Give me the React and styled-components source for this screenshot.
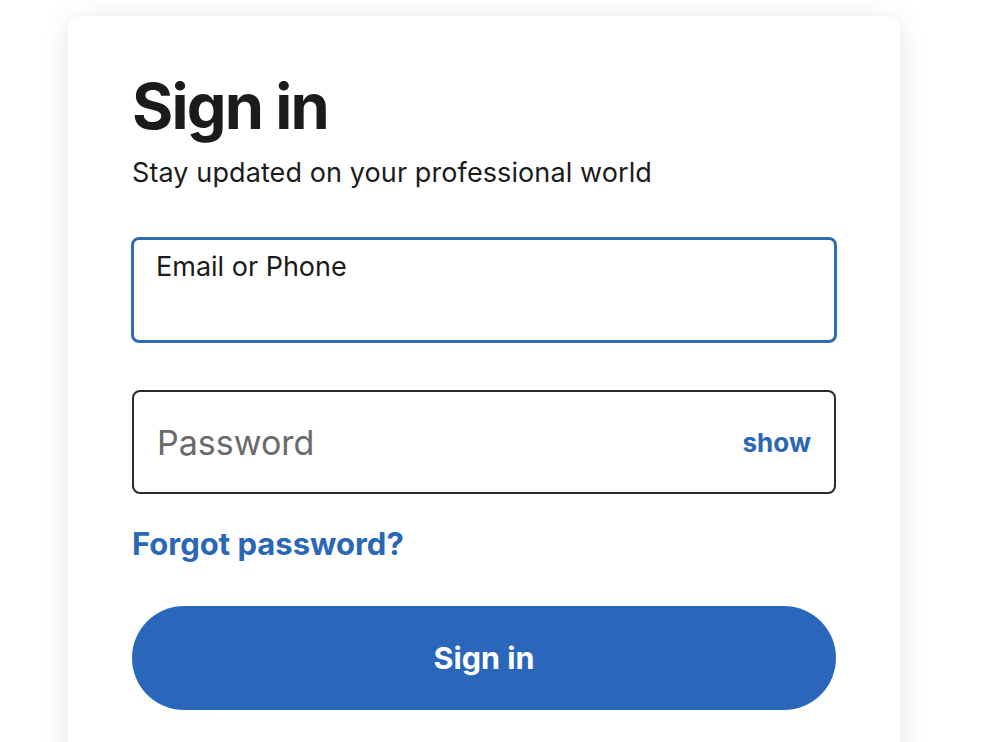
import React from "react";
import styled, { createGlobalStyle } from "styled-components";

const Global = createGlobalStyle`
  html, body { margin: 0; padding: 0; background: #ffffff; }
  body { font-family: Inter, "Noto Sans", "Liberation Sans", sans-serif; color: #1b1b1b; }
  * { box-sizing: border-box; }
`;

const Page = styled.div`
  width: 989px;
  height: 742px;
  overflow: hidden;
  padding: 16px 0 0 68px;
`;

const Card = styled.div`
  width: 832px;
  min-height: 760px;
  background: #fff;
  border-radius: 12px;
  box-shadow: 0 4px 28px rgba(0, 0, 0, 0.11);
  padding: 57px 64px 0 64px;
  display: flex;
  flex-direction: column;
`;

const Title = styled.h1`
  margin: 0;
  font-size: 63px;
  line-height: 66px;
  font-weight: 700;
  letter-spacing: -1.8px;
  color: #1b1b1b;
`;

const Subtitle = styled.p`
  margin: 18px 0 0;
  font-size: 27px;
  line-height: 31px;
  font-weight: 400;
  letter-spacing: 0.1px;
  color: #1b1b1b;
`;

const Field = styled.div`
  margin-top: ${(p) => p.$mt}px;
  margin-left: ${(p) => (p.$focused ? "-1px" : "0")};
  margin-right: ${(p) => (p.$focused ? "-1px" : "0")};
  height: ${(p) => p.$h}px;
  border: ${(p) => (p.$focused ? "3px solid #2f6db3" : "2px solid #2b2b2b")};
  border-radius: 8px;
  display: flex;
  align-items: ${(p) => (p.$focused ? "flex-start" : "center")};
  justify-content: space-between;
  padding: ${(p) => (p.$focused ? "11px 22px" : "0 23px")};
`;

const Label = styled.span`
  font-size: 27px;
  line-height: 31px;
  color: #1b1b1b;
`;

const Placeholder = styled.span`
  font-size: 34px;
  line-height: 41px;
  color: #6a6a6a;
`;

const Show = styled.span`
  font-size: 26px;
  line-height: 31px;
  font-weight: 700;
  color: #2a67b5;
`;

const Link = styled.a`
  margin-top: 33px;
  font-size: 31px;
  line-height: 34px;
  font-weight: 700;
  color: #2a67b5;
  text-decoration: none;
  align-self: flex-start;
`;

const Button = styled.button`
  margin-top: 45px;
  height: 104px;
  border: none;
  border-radius: 52px;
  background: #2a67ba;
  color: #fff;
  font-family: inherit;
  font-size: 30.5px;
  line-height: 36px;
  font-weight: 700;
`;

export default function App() {
  return (
    <>
      <Global />
      <Page>
        <Card>
          <Title>Sign in</Title>
          <Subtitle>Stay updated on your professional world</Subtitle>
          <Field $focused $mt={49} $h={106}>
            <Label>Email or Phone</Label>
          </Field>
          <Field $mt={47} $h={104}>
            <Placeholder>Password</Placeholder>
            <Show>show</Show>
          </Field>
          <Link href="#">Forgot password?</Link>
          <Button>Sign in</Button>
        </Card>
      </Page>
    </>
  );
}
